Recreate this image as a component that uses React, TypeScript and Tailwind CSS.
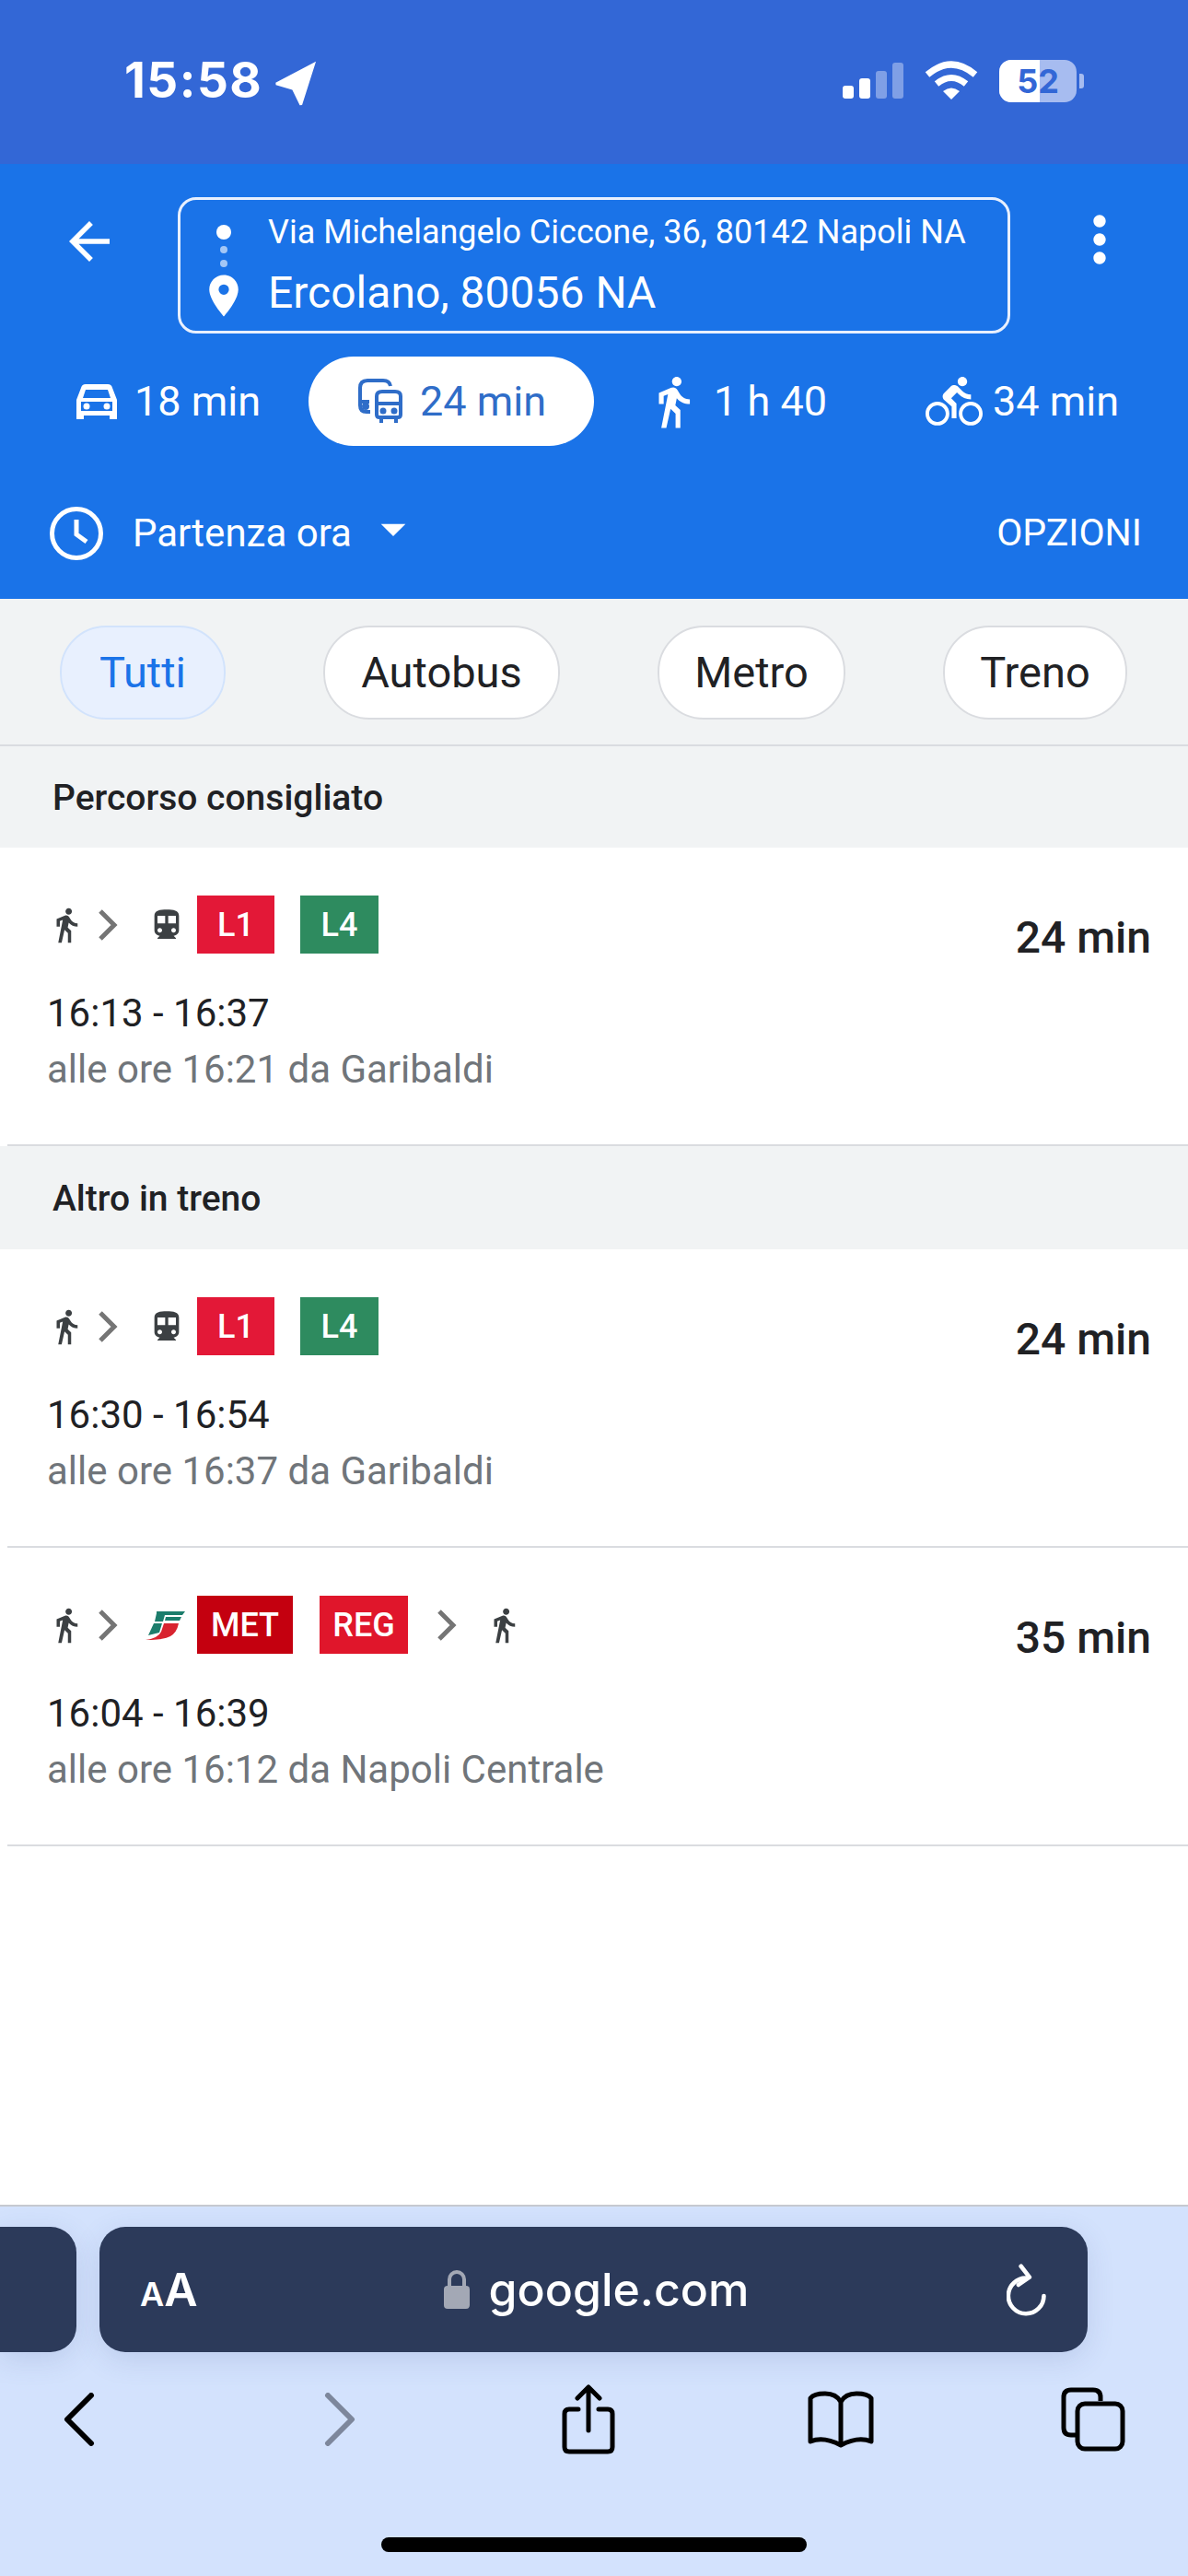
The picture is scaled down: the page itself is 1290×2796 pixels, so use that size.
import React from "react";
import {
  MdArrowBack,
  MdMoreVert,
  MdDirectionsWalk,
  MdDirectionsBike,
  MdDirectionsTransit,
  MdPlace,
  MdNavigation,
  MdArrowDropDown,
} from "react-icons/md";

const Chevron = ({ className = "" }: { className?: string }) => (
  <svg viewBox="0 0 22 36" className={className} fill="none" stroke="#757575" strokeWidth="5">
    <path d="M3 3l15 15L3 33" />
  </svg>
);

const CarIcon = () => (
  <svg viewBox="0 0 50 42" className="w-[50px] h-[42px]" fill="none">
    <path d="M3 19l5-13q1-4 5-4h24q4 0 5 4l5 13v21h-8v-4H11v4H3z" fill="#fff" />
    <path d="M10 17l3-9h24l3 9z" fill="#1a73e8" />
    <rect x="8" y="21" width="34" height="10" fill="#1a73e8" />
    <circle cx="14" cy="26" r="3.5" fill="#fff" />
    <circle cx="36" cy="26" r="3.5" fill="#fff" />
  </svg>
);

const TransitIcon = () => (
  <svg viewBox="0 0 52 52" className="w-[52px] h-[52px]" fill="none" stroke="#2f6dc8" strokeWidth="4">
    <path d="M36 9q-1-6-8-6H11q-8 0-8 8v19q0 7 7 7h4" />
    <path d="M4 26h9" />
    <circle cx="9" cy="31" r="2" fill="#2f6dc8" />
    <path d="M21 20q0-5 6-5h14q6 0 6 5v20q0 3-3 3H24q-3 0-3-3z" fill="#fff" />
    <path d="M21 28h26M26 43v6M42 43v6" />
    <circle cx="28" cy="36" r="1.5" fill="#2f6dc8" />
    <circle cx="40" cy="36" r="1.5" fill="#2f6dc8" />
  </svg>
);

const ClockIcon = () => (
  <svg viewBox="0 0 60 60" className="w-[60px] h-[60px]" fill="none" stroke="#fff" strokeWidth="5">
    <circle cx="30" cy="30" r="26.5" />
    <path d="M30 15v16l11 8" />
  </svg>
);

const FsLogo = () => (
  <svg viewBox="0 0 43 32" className="w-[43px] h-[32px]">
    <path d="M12 1h31l-3 4H21l-2 7h-9l2-9z" fill="#1c7d6c" />
    <path d="M9 14h9l-3 10-12 3z" fill="#1c7d6c" />
    <path d="M22 7h17l-2 4H21z" fill="#1c7d6c" />
    <path d="M20 14h16q-2 10-9 14T0 32q14-2 17-9z" fill="#d8232f" />
  </svg>
);

const Badge = ({ label, bg, w, ml = "" }: { label: string; bg: string; w: string; ml?: string }) => (
  <div className={`${bg} ${w} ${ml} h-[63px] flex items-center justify-center text-white text-[36px] font-medium`}>
    {label}
  </div>
);

const WalkSmall = ({ ml = "" }: { ml?: string }) => (
  <MdDirectionsWalk className={`w-[42px] h-[42px] text-[#3c4043] shrink-0 ${ml}`} />
);

const TransitSmall = () => <MdDirectionsTransit className="w-[40px] h-[40px] text-[#3c4043] shrink-0 ml-[33px] mr-[13px]" />;

const Row = ({
  icons,
  time,
  range,
  sub,
}: {
  icons: React.ReactNode;
  range: string;
  sub: string;
  time: string;
}) => (
  <div className="h-[324px] bg-white relative flex flex-col pt-[52px] pl-[52px] pr-[40px]">
    <div className="flex justify-between h-[72px]">
      <div className="flex items-center h-[63px]">{icons}</div>
      <div className="text-[48px] leading-[52px] font-medium text-[#202124] mt-[20px]">{time}</div>
    </div>
    <div className="-ml-[1px] mt-[31px] text-[42px] leading-[50px] text-[#202124]">{range}</div>
    <div className="-ml-[1px] mt-[11px] text-[42px] leading-[50px] text-[#70757a]">{sub}</div>
    <div className="absolute left-[8px] right-0 bottom-0 h-[2px] bg-[#dadce0]" />
  </div>
);

const SectionHeader = ({ label, h }: { label: string; h: string }) => (
  <div className={`${h} bg-[#f1f3f4] flex items-center pl-[57px] pt-[2px] text-[39px] font-medium text-[#202124]`}>{label}</div>
);

const Chip = ({ label, w, active = false }: { label: string; w: string; active?: boolean }) => (
  <div
    className={`${w} h-[102px] rounded-[50px] border-2 flex items-center justify-center text-[47px] ${
      active ? "bg-[#e8f0fe] border-[#d2e3fc] text-[#1a73e8]" : "bg-white border-[#dadce0] text-[#202124]"
    }`}
  >
    {label}
  </div>
);

export default function App() {
  return (
    <div className="w-[1290px] h-[2796px] flex flex-col bg-white overflow-hidden font-['Roboto',sans-serif]">
      {/* status bar */}
      <div className="h-[178px] bg-[#3367d6] flex items-center justify-between pl-[135px] pr-[113px] pb-[3px] text-white font-['Inter',sans-serif]">
        <div className="flex items-center">
          <span className="text-[53px] font-bold tracking-[1.5px]">15:58</span>
          <MdNavigation className="w-[60px] h-[60px] rotate-[40deg] ml-[12px] -mt-[4px]" />
        </div>
        <div className="flex items-center">
          <svg viewBox="0 0 66 42" className="w-[66px] h-[42px] mr-[22px]">
            <rect x="0" y="26" width="12" height="14" rx="3" fill="#fff" />
            <rect x="18" y="18" width="12" height="22" rx="3" fill="#fff" />
            <rect x="36" y="10" width="12" height="30" rx="3" fill="#7f9fe6" />
            <rect x="54" y="1" width="12" height="39" rx="3" fill="#7f9fe6" />
          </svg>
          <svg viewBox="0 0 60 44" className="w-[60px] h-[44px] mr-[22px]" fill="none" stroke="#fff" strokeWidth="7">
            <path d="M4 15q26-22 52 0" />
            <path d="M14 25q16-13 32 0" />
            <path d="M30 42l-9-9q9-7 18 0z" fill="#fff" stroke="none" />
          </svg>
          <div className="relative w-[84px] h-[46px] rounded-[13px] bg-[#a7bcf0] overflow-hidden">
            <div className="absolute left-0 top-0 bottom-0 w-[44px] bg-white" />
            <div className="absolute inset-0 flex items-center justify-center text-[36px] font-bold text-[#3367d6]">52</div>
          </div>
          <div className="w-[5px] h-[16px] bg-[#a7bcf0] rounded-r-[3px] ml-[3px]" />
        </div>
      </div>

      {/* header */}
      <div className="h-[472px] bg-[#1a73e8] flex flex-col text-white">
        <div className="flex items-center pt-[36px] pl-[64px]">
          <MdArrowBack className="w-[66px] h-[66px] -mt-[52px]" />
          <div className="ml-[63px] w-[904px] h-[148px] shrink-0 rounded-[20px] border-[3px] border-[#e8f0fe] flex items-center pl-[29px]">
            <div className="flex flex-col items-center w-[36px] mt-[16px]">
              <div className="w-[16px] h-[16px] rounded-full bg-white" />
              <div className="w-[8px] h-[8px] rounded-full bg-white/60 mt-[7px]" />
              <div className="w-[8px] h-[8px] rounded-full bg-white/60 mt-[7px]" />
              <MdPlace className="w-[54px] h-[54px] mt-[4px] shrink-0" />
            </div>
            <div className="ml-[30px] flex flex-col">
              <div className="text-[36px] leading-[44px] whitespace-nowrap">Via Michelangelo Ciccone, 36, 80142 Napoli NA</div>
              <div className="text-[48px] leading-[56px] mt-[16px] whitespace-nowrap">Ercolano, 80056 NA</div>
            </div>
          </div>
          <MdMoreVert className="w-[80px] h-[80px] ml-[57px] -mt-[56px]" />
        </div>

        <div className="mt-[25px] h-[97px] flex items-center text-[45px]">
          <div className="ml-[80px] flex items-center">
            <CarIcon />
            <span className="ml-[16px]">18 min</span>
          </div>
          <div className="ml-[52px] w-[310px] h-[97px] rounded-[49px] bg-white flex items-center pl-[53px] text-[#2f6dc8]">
            <TransitIcon />
            <span className="ml-[16px]">24 min</span>
          </div>
          <div className="ml-[55px] flex items-center">
            <MdDirectionsWalk className="w-[62px] h-[62px]" />
            <span className="ml-[13px]">1 h 40</span>
          </div>
          <div className="ml-[107px] flex items-center">
            <MdDirectionsBike className="w-[62px] h-[62px]" />
            <span className="ml-[11px]">34 min</span>
          </div>
        </div>

        <div className="mt-[63px] flex items-center pl-[53px] pr-[50px]">
          <ClockIcon />
          <span className="ml-[31px] text-[42px]">Partenza ora</span>
          <MdArrowDropDown className="w-[64px] h-[64px] ml-[13px] -mt-[10px]" />
          <span className="ml-auto text-[41px]">OPZIONI</span>
        </div>
      </div>

      {/* filters */}
      <div className="h-[160px] bg-[#f1f3f4] border-b-2 border-[#dadce0] flex items-center pl-[65px] gap-[106px] pt-[2px]">
        <Chip label="Tutti" w="w-[180px]" active />
        <Chip label="Autobus" w="w-[257px]" />
        <Chip label="Metro" w="w-[204px]" />
        <Chip label="Treno" w="w-[200px]" />
      </div>

      <SectionHeader label="Percorso consigliato" h="h-[110px]" />
      <Row
        icons={
          <>
            <WalkSmall ml="-ml-[1px]" />
            <Chevron className="w-[22px] h-[36px] ml-[13px]" />
            <TransitSmall />
            <Badge label="L1" bg="bg-[#e31837]" w="w-[84px]" />
            <Badge label="L4" bg="bg-[#2e8b5f]" w="w-[85px]" ml="ml-[28px]" />
          </>
        }
        time="24 min"
        range="16:13 - 16:37"
        sub="alle ore 16:21 da Garibaldi"
      />
      <SectionHeader label="Altro in treno" h="h-[112px]" />
      <Row
        icons={
          <>
            <WalkSmall ml="-ml-[1px]" />
            <Chevron className="w-[22px] h-[36px] ml-[13px]" />
            <TransitSmall />
            <Badge label="L1" bg="bg-[#e31837]" w="w-[84px]" />
            <Badge label="L4" bg="bg-[#2e8b5f]" w="w-[85px]" ml="ml-[28px]" />
          </>
        }
        time="24 min"
        range="16:30 - 16:54"
        sub="alle ore 16:37 da Garibaldi"
      />
      <Row
        icons={
          <>
            <WalkSmall ml="-ml-[1px]" />
            <Chevron className="w-[22px] h-[36px] ml-[13px] mr-[30px]" />
            <FsLogo />
            <Badge label="MET" bg="bg-[#c4000f]" w="w-[104px]" ml="ml-[13px]" />
            <Badge label="REG" bg="bg-[#e0162b]" w="w-[96px]" ml="ml-[29px]" />
            <Chevron className="w-[22px] h-[36px] ml-[31px]" />
            <WalkSmall ml="ml-[30px]" />
          </>
        }
        time="35 min"
        range="16:04 - 16:39"
        sub="alle ore 16:12 da Napoli Centrale"
      />

      <div className="flex-1 bg-white" />

      {/* safari bar */}
      <div className="h-[403px] bg-[#d3e2fd] border-t-2 border-[#c6c9d0] flex flex-col font-['Inter',sans-serif]">
        <div className="mt-[22px] flex h-[136px]">
          <div className="w-[83px] rounded-r-[28px] bg-[#2c3a5a] shadow-[0_8px_30px_rgba(60,80,140,0.15)]" />
          <div className="ml-[25px] w-[1073px] rounded-[28px] bg-[#2c3a5a] shadow-[0_8px_30px_rgba(60,80,140,0.15)] flex items-center pl-[44px] pr-[42px] text-white">
            <span className="font-semibold flex items-baseline w-[70px]">
              <span className="text-[36px]">A</span>
              <span className="text-[50px]">A</span>
            </span>
            <div className="flex-1 flex items-center justify-center pr-[20px]">
              <svg viewBox="0 0 28 42" className="w-[28px] h-[42px] mr-[21px]">
                <path d="M6 18v-8a8 8 0 0 1 16 0v8" fill="none" stroke="#a3a8b5" strokeWidth="4" />
                <rect x="0" y="17" width="28" height="25" rx="4" fill="#a3a8b5" />
              </svg>
              <span className="text-[50px] font-medium">google.com</span>
            </div>
            <svg viewBox="0 0 50 62" className="w-[46px] h-[57px]" fill="none" stroke="#fff" strokeWidth="5" strokeLinecap="round">
              <path d="M25 17a21 21 0 1 0 20 21" transform="translate(-1 0)" />
              <path d="M17 3l10 13-13 9" strokeLinejoin="round" />
            </svg>
          </div>
        </div>

        <div className="mt-[35px] h-[76px] relative flex items-center">
          <svg viewBox="0 0 34 58" className="ml-[69px] w-[34px] h-[58px]" fill="none" stroke="#000" strokeWidth="6" strokeLinecap="round" strokeLinejoin="round">
            <path d="M30 3L4 29l26 26" />
          </svg>
          <svg viewBox="0 0 34 58" className="ml-[249px] w-[34px] h-[58px]" fill="none" stroke="#7d879c" strokeWidth="6" strokeLinecap="round" strokeLinejoin="round">
            <path d="M4 3l26 26L4 55" />
          </svg>
          <svg viewBox="0 0 58 76" className="ml-[224px] w-[58px] h-[76px]" fill="none" stroke="#000" strokeWidth="5" strokeLinecap="round" strokeLinejoin="round">
            <path d="M18 27H8q-5 0-5 5v36q0 5 5 5h42q5 0 5-5V32q0-5-5-5H40" />
            <path d="M29 50V4M17 15L29 3l12 12" />
          </svg>
          <svg viewBox="0 0 74 62" className="ml-[208px] w-[74px] h-[62px]" fill="none" stroke="#000" strokeWidth="5" strokeLinejoin="round">
            <path d="M37 12Q32 3 20 3Q8 3 4 8v47q14-6 33 4q19-10 33-4V8q-4-5-16-5Q42 3 37 12zM37 12v47" />
          </svg>
          <svg viewBox="0 0 70 70" className="ml-[202px] w-[70px] h-[70px]" fill="none" stroke="#000" strokeWidth="5" strokeLinejoin="round">
            <path d="M16 52H11q-8 0-8-8V11q0-8 8-8h24q8 0 8 8v4" />
            <rect x="18" y="18" width="49" height="49" rx="8" fill="#d3e2fd" />
          </svg>
        </div>

        <div className="mt-[90px] mx-auto w-[462px] h-[16px] rounded-full bg-black" />
      </div>
    </div>
  );
}
